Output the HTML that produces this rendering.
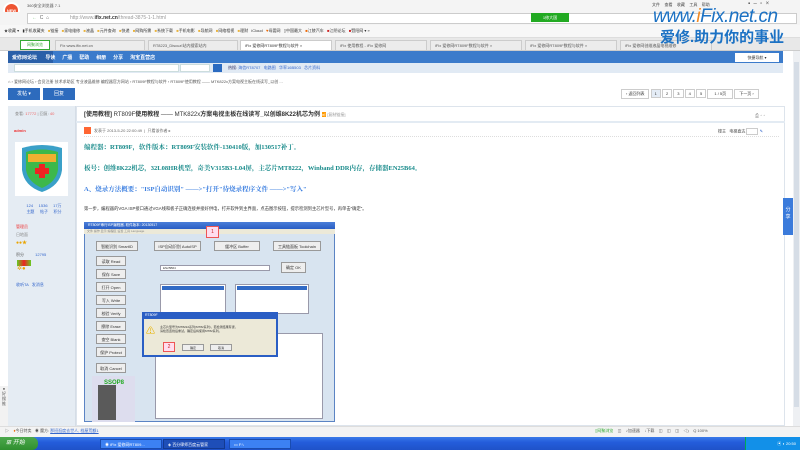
<!DOCTYPE html>
<html><head><meta charset="utf-8"><style>
*{margin:0;padding:0;box-sizing:border-box}
body{width:800px;height:450px;overflow:hidden;position:relative;background:#fff;font-family:"Liberation Sans","Noto Sans CJK SC",sans-serif;font-size:5px;color:#333}
.a{position:absolute;white-space:nowrap}
.btn{position:absolute;background:#eee;border:1px solid #999;font-size:4px;text-align:center;line-height:10px}
</style></head><body>
<!-- title bar -->
<div class="a" style="left:0;top:0;width:800px;height:13px;background:#f4f4f4"></div>
<div class="a" style="left:3px;top:2px;width:17px;height:17px;border-radius:50%;background:#e53;border:2px solid #fff;color:#fff;font-size:4px;line-height:13px;text-align:center;font-weight:bold">NEW</div>
<div class="a" style="left:27px;top:3px;font-size:4px;color:#555">360安全浏览器 7.1</div>
<div class="a" style="left:652px;top:2px;font-size:4px;color:#444">文件 &nbsp;&nbsp; 查看 &nbsp;&nbsp; 收藏 &nbsp;&nbsp; 工具 &nbsp;&nbsp; 帮助</div>
<div class="a" style="left:748px;top:1px;width:50px;height:10px;font-size:6px;color:#555">▪ &nbsp;– &nbsp;▫ &nbsp;×</div>
<!-- address -->
<div class="a" style="left:0;top:12px;width:800px;height:13px;background:#f4f4f4"></div>
<div class="a" style="left:27px;top:13px;width:770px;height:11px;background:#fff;border:1px solid #ccc"></div>
<div class="a" style="left:32px;top:15px;font-size:5px;color:#8c8">← &nbsp;<span style="color:#666">C &nbsp;⌂</span></div>
<div class="a" style="left:70px;top:15px;font-size:5px;color:#999">http://www.<b style="color:#333">ifix.net.cn</b>/thread-3875-1-1.html</div>
<div class="a" style="left:531px;top:13px;width:38px;height:9px;background:#2a2;color:#fff;font-size:4px;line-height:9px;text-align:center">1修大国</div>
<!-- bookmarks -->
<div class="a" style="left:0;top:25px;width:800px;height:13px;background:#f7f7f7;border-bottom:1px solid #ddd"></div>
<div class="a" style="left:4px;top:28px;font-size:4px;color:#333">★收藏 ▾ &nbsp; ▮手机收藏夹 &nbsp; <span style="color:#e9b23a">■</span>链接 &nbsp; <span style="color:#e9b23a">■</span>家电维修 &nbsp; <span style="color:#e9b23a">■</span>液晶 &nbsp; <span style="color:#e9b23a">■</span>元件查询 &nbsp; <span style="color:#e9b23a">■</span>快递 &nbsp; <span style="color:#e9b23a">■</span>网购所需 &nbsp; <span style="color:#e9b23a">■</span>系统下载 &nbsp; <span style="color:#e9b23a">■</span>手机电影 &nbsp; <span style="color:#e9b23a">■</span>导航网 &nbsp; <span style="color:#e9b23a">■</span>网络相视 &nbsp; <span style="color:#e9b23a">■</span>理财 &nbsp; iCloud &nbsp; <span style="color:#e60">♥</span>母婴网 &nbsp; ▯中国最大 &nbsp; <span style="color:#e60">■</span>江陵汽车 &nbsp; <span style="color:#c22">■</span>江阴论坛 &nbsp; <span style="color:#c22">■</span>暨阳网 ▾ »</div>
<!-- tabs -->
<div class="a" style="left:0;top:38px;width:800px;height:13px;background:#e8e8e8;border-bottom:1px solid #ccc"></div>
<div class="a" style="left:20px;top:40px;width:30px;height:10px;border:1px solid #3a3;color:#3a3;font-size:4px;line-height:8px;text-align:center;background:#fff">网聚浏览</div>
<div class="a" style="left:55px;top:40px;width:90px;height:11px;background:#ececec;border:1px solid #ccc;font-size:4px;line-height:9px;padding-left:4px;color:#555">Fix www.ifix.net.cn</div>
<div class="a" style="left:148px;top:40px;width:90px;height:11px;background:#ececec;border:1px solid #ccc;font-size:4px;line-height:9px;padding-left:4px;color:#555">RT8223_Discuz!站内搜索站内</div>
<div class="a" style="left:240px;top:40px;width:92px;height:11px;background:#fff;border:1px solid #ccc;font-size:4px;line-height:9px;padding-left:4px;color:#333">iFix 爱修网RT809F数程与软件 ×</div>
<div class="a" style="left:335px;top:40px;width:92px;height:11px;background:#ececec;border:1px solid #ccc;font-size:4px;line-height:9px;padding-left:4px;color:#555">iFix 使用教程 - iFix 爱修网</div>
<div class="a" style="left:430px;top:40px;width:92px;height:11px;background:#ececec;border:1px solid #ccc;font-size:4px;line-height:9px;padding-left:4px;color:#555">iFix 爱修网RT809F数程与软件 ×</div>
<div class="a" style="left:525px;top:40px;width:92px;height:11px;background:#ececec;border:1px solid #ccc;font-size:4px;line-height:9px;padding-left:4px;color:#555">iFix 爱修网RT809F数程与软件 ×</div>
<div class="a" style="left:620px;top:40px;width:92px;height:11px;background:#ececec;border:1px solid #ccc;font-size:4px;line-height:9px;padding-left:4px;color:#555">iFix 爱修网创维液晶电视维修</div>
<!-- watermark -->
<div class="a" style="left:653px;top:6px;font-size:19px;font-style:italic;color:#1c72c4;font-family:'Liberation Sans',sans-serif;letter-spacing:-0.5px">www.<span style="color:#f08a24">i</span>Fix.net.cn</div>
<div class="a" style="left:660px;top:26px;font-size:15px;font-weight:bold;color:#1c72c4">爱修.助力你的事业</div>
<!-- page -->
<div class="a" style="left:0;top:51px;width:793px;height:375px;background:#fff"></div>
<div class="a" style="left:793px;top:51px;width:7px;height:375px;background:#eef0f3"></div>
<div class="a" style="left:794px;top:62px;width:5px;height:345px;background:#d6dde6"></div>
<div class="a" style="left:8px;top:51px;width:775px;height:12px;background:#3b7bcb"></div>
<div class="a" style="left:8px;top:51px;width:45px;height:12px;background:#2a5fa8"></div>
<div class="a" style="left:12px;top:54px;font-size:5px;color:#fff;font-weight:bold">爱修网论坛 &nbsp;&nbsp;&nbsp;&nbsp; 导读 &nbsp;&nbsp;&nbsp; 广播 &nbsp;&nbsp;&nbsp; 帮助 &nbsp;&nbsp;&nbsp; 相册 &nbsp;&nbsp;&nbsp; 分享 &nbsp;&nbsp;&nbsp; 淘宝直营店</div>
<div class="a" style="left:735px;top:53px;width:44px;height:9px;background:#fff;font-size:4px;line-height:9px;text-align:center;color:#333">快捷导航 ▾</div>
<div class="a" style="left:8px;top:63px;width:775px;height:10px;background:#e1eaf4"></div>
<div class="a" style="left:14px;top:64px;width:165px;height:8px;background:#fff;border:1px solid #cdd"></div>
<div class="a" style="left:180px;top:64px;width:30px;height:8px;background:#fff;border:1px solid #cdd"></div>
<div class="a" style="left:213px;top:64px;width:9px;height:8px;background:#2a6ac0"></div>
<div class="a" style="left:228px;top:65px;font-size:4px;color:#336">热搜: <span style="color:#36c">海信RT8707 &nbsp; 电路图 &nbsp; 华率16B503 &nbsp; 芯片资料</span></div>
<div class="a" style="left:8px;top:79px;font-size:4px;color:#555">⌂ › 爱修网论坛 › 会员注册 技术求助区 专业液晶维修 编程器官方网站 › RT809F教程与软件 › RT809F使用教程 —— MTK822x方案电视主板在线读写_以创 ...</div>
<div class="a" style="left:8px;top:88px;width:32px;height:12px;background:#2d6bbd;color:#fff;font-size:5px;line-height:12px;text-align:center">发帖 ▾</div>
<div class="a" style="left:43px;top:88px;width:32px;height:12px;background:#2d6bbd;color:#fff;font-size:5px;line-height:12px;text-align:center">回复</div>
<div class="a" style="left:621px;top:89px;font-size:4px;color:#333;word-spacing:0">
<span style="display:inline-block;border:1px solid #ccc;padding:1px 4px">‹ 返回列表</span> <span style="display:inline-block;border:1px solid #ccc;padding:1px 3px;background:#e4ecf6">1</span> <span style="display:inline-block;border:1px solid #ccc;padding:1px 3px">2</span> <span style="display:inline-block;border:1px solid #ccc;padding:1px 3px">3</span> <span style="display:inline-block;border:1px solid #ccc;padding:1px 3px">4</span> <span style="display:inline-block;border:1px solid #ccc;padding:1px 3px">5</span> <span style="display:inline-block;border:1px solid #ccc;padding:1px 6px">1 / 5页</span> <span style="display:inline-block;border:1px solid #ccc;padding:1px 4px">下一页 ›</span></div>
<!-- sidebar -->
<div class="a" style="left:8px;top:106px;width:68px;height:320px;background:#e5ecf3;border-right:1px solid #d5dde6"></div>
<div class="a" style="left:15px;top:111px;font-size:4px;color:#888">查看: <span style="color:#e66">17772</span> | 回复: <span style="color:#e66">40</span></div>
<div class="a" style="left:14px;top:128px;font-size:4px;color:#e33;font-weight:bold">admin</div>
<div class="a" style="left:15px;top:142px;width:53px;height:54px;background:#fff"></div>
<svg class="a" style="left:18px;top:144px" width="48" height="50" viewBox="0 0 48 50"><path d="M4 4 Q24 -2 44 4 L44 26 Q42 42 24 48 Q6 42 4 26Z" fill="#3aa0c8"/><path d="M8 8 Q24 3 40 8 L40 26 Q38 38 24 44 Q10 38 8 26Z" fill="#3db84a"/><rect x="10" y="10" width="28" height="8" fill="#f0b030"/><rect x="21" y="20" width="6" height="14" fill="#e22"/><rect x="17" y="24" width="14" height="6" fill="#e22"/></svg>
<div class="a" style="left:14px;top:203px;font-size:4px;color:#36c;line-height:6px;text-align:center;width:60px">124 &nbsp;&nbsp;&nbsp; 1536 &nbsp;&nbsp;&nbsp; 17万<br>主题 &nbsp;&nbsp;&nbsp; 帖子 &nbsp;&nbsp;&nbsp; 积分</div>
<div class="a" style="left:16px;top:224px;font-size:4px;color:#e33">管理员</div>
<div class="a" style="left:16px;top:232px;font-size:4px;color:#888">日地面</div>
<div class="a" style="left:16px;top:239px;font-size:5px;color:#e9a400">●●★</div>
<div class="a" style="left:16px;top:252px;font-size:4px;color:#555">积分 &nbsp;&nbsp;&nbsp;&nbsp;&nbsp;&nbsp;&nbsp;&nbsp; <span style="color:#36c">12795</span></div>
<div class="a" style="left:17px;top:260px;width:14px;height:6px;background:linear-gradient(90deg,#6c2,#e22,#6c2)"></div>
<div class="a" style="left:17px;top:265px;font-size:6px;color:#e9a400">✲●</div>
<div class="a" style="left:16px;top:282px;font-size:4px;color:#36c">收听TA &nbsp; 发消息</div>
<!-- post -->
<div class="a" style="left:76px;top:106px;width:709px;height:320px;border:1px solid #dde4ec"></div>
<div class="a" style="left:76px;top:106px;width:709px;height:17px;border-bottom:2px solid #e3ebf3"></div>
<div class="a" style="left:84px;top:109px;font-size:6px;color:#333"><b>[使用教程]</b> RT809F<b>使用教程</b> —— MTK822x<b>方案电视主板在线读写_以创维8K22机芯为例</b> <span style="background:#f90;color:#fff;font-size:4px">🗐</span> <span style="font-size:4px;color:#999">[复制链接]</span></div>
<div class="a" style="left:755px;top:113px;font-size:5px;color:#888">⎙ ◦ ◦</div>
<div class="a" style="left:84px;top:127px;width:7px;height:7px;background:#f63"></div>
<div class="a" style="left:94px;top:128px;font-size:4px;color:#666">发表于 2013-5-20 22:00:49 &nbsp;|&nbsp; 只看该作者 ▸</div>
<div class="a" style="left:718px;top:128px;font-size:4px;color:#444">楼主 &nbsp; 电梯直达 <span style="display:inline-block;width:12px;height:7px;border:1px solid #ccc;vertical-align:middle"></span> <span style="color:#36c">✎</span></div>
<div class="a" style="left:84px;top:136px;width:695px;border-top:1px dotted #ddd"></div>
<div class="a" style="left:84px;top:142px;font-size:6.5px;color:#178a8a;font-weight:bold;font-family:'Liberation Serif','Noto Serif CJK SC',serif">编程器：RT809F，软件版本：RT809F安装软件-130410版，加130517补丁。</div>
<div class="a" style="left:84px;top:163px;font-size:6.5px;color:#178a8a;font-weight:bold;font-family:'Liberation Serif','Noto Serif CJK SC',serif">板号：创维8K22机芯，32L08HR机型，奇美V315B3-L04屏，主芯片MT8222，Winband DDR内存，存储器EN25B64。</div>
<div class="a" style="left:84px;top:184px;font-size:6.5px;color:#3a7ee0;font-weight:bold;font-family:'Liberation Serif','Noto Serif CJK SC',serif">A、烧录方法概要："ISP自动识别" ——&gt;"打开"待烧录程序文件 ——&gt;"写入"</div>
<div class="a" style="left:84px;top:206px;font-size:4.3px;color:#333">第一步，编程器的VGA ISP接口通过VGA线和板子正确连接并接好供电，打开软件到主界面，点击图示按钮，提示检测到主芯片型号，再单击"确定"。</div>
<!-- screenshot -->
<div class="a" style="left:84px;top:222px;width:251px;height:200px;background:#d8e4f0;border:1px solid #5b84c4"></div>
<div class="a" style="left:84px;top:222px;width:251px;height:7px;background:linear-gradient(#4b7fd8,#2a5ec4);color:#fff;font-size:3.5px;line-height:7px;padding-left:4px">RT809F串行ISP编程器, 软件版本: 20130517</div>
<div class="a" style="left:84px;top:229px;width:251px;height:5px;background:#ece9d8;font-size:3px;color:#888;padding-left:3px">文件 操作 显示 编程区 设置 工具 Language</div>
<div class="btn" style="left:96px;top:241px;width:42px;height:10px">智能识别 SmartID</div>
<div class="btn" style="left:154px;top:241px;width:47px;height:10px">ISP自动识别 AutoISP</div>
<div class="btn" style="left:214px;top:241px;width:46px;height:10px">缓冲区 Buffer</div>
<div class="btn" style="left:273px;top:241px;width:48px;height:10px">工具链面板 Toolchain</div>
<div class="a" style="left:206px;top:226px;width:13px;height:12px;background:#fde;border:1px solid #e55;color:#c22;font-size:5px;text-align:center;line-height:10px">1</div>
<div class="a" style="left:95px;top:255px;width:30px;height:120px;font-size:0"></div>
<div class="btn" style="left:96px;top:256px;width:30px;height:10px">读取 Read</div>
<div class="btn" style="left:96px;top:269px;width:30px;height:10px">保存 Save</div>
<div class="btn" style="left:96px;top:282px;width:30px;height:10px">打开 Open</div>
<div class="btn" style="left:96px;top:295px;width:30px;height:10px">写入 Write</div>
<div class="btn" style="left:96px;top:308px;width:30px;height:10px">校验 Verify</div>
<div class="btn" style="left:96px;top:321px;width:30px;height:10px">擦除 Erase</div>
<div class="btn" style="left:96px;top:334px;width:30px;height:10px">查空 Blank</div>
<div class="btn" style="left:96px;top:347px;width:30px;height:10px">保护 Protect</div>
<div class="btn" style="left:96px;top:363px;width:30px;height:10px">取消 Cancel</div>
<div class="a" style="left:160px;top:265px;width:110px;height:6px;background:#fff;border:1px solid #99a;font-size:3px;padding-left:2px">EN25B64</div>
<div class="btn" style="left:281px;top:262px;width:25px;height:11px">确定 OK</div>
<div class="a" style="left:160px;top:284px;width:66px;height:30px;background:#fff;border:1px solid #99a"><div style="background:#316ac5;height:4px;margin:1px"></div></div>
<div class="a" style="left:235px;top:284px;width:74px;height:30px;background:#fff;border:1px solid #99a"><div style="background:#316ac5;height:4px;margin:1px"></div></div>
<div class="a" style="left:155px;top:333px;width:168px;height:86px;background:#fff;border:1px solid #99a"></div>
<div class="a" style="left:142px;top:312px;width:136px;height:45px;background:#ece9d8;border:2px solid #2a5ec4"></div>
<div class="a" style="left:142px;top:312px;width:136px;height:7px;background:#2a5ec4;color:#fff;font-size:3.5px;line-height:7px;padding-left:3px">RT809F</div>
<div class="a" style="left:146px;top:324px;font-size:9px;color:#e9b400">⚠</div>
<div class="a" style="left:160px;top:325px;font-size:3px;color:#333;line-height:4px">主芯片型号为MT8222系列(MT82系列)，若检测结果有误，<br>请检查连线后重试。确定后将使用MT82系列。</div>
<div class="btn" style="left:182px;top:344px;width:22px;height:7px;line-height:6px;font-size:3px">确定</div>
<div class="btn" style="left:210px;top:344px;width:22px;height:7px;line-height:6px;font-size:3px">取消</div>
<div class="a" style="left:163px;top:342px;width:12px;height:10px;background:#fde;border:1px solid #e55;color:#c22;font-size:5px;text-align:center;line-height:8px">2</div>
<div class="a" style="left:92px;top:376px;width:43px;height:46px;background:#dde"></div>
<div class="a" style="left:98px;top:385px;width:18px;height:35px;background:#5a5a5a"></div>
<div class="a" style="left:104px;top:380px;font-size:6px;color:#2a2;font-weight:bold">SSOP8</div>
<!-- share -->
<div class="a" style="left:783px;top:198px;width:10px;height:37px;background:#3b7bdb;color:#fff;font-size:5px;line-height:7px;text-align:center;padding-top:9px">分<br>享</div>
<div class="a" style="left:0;top:386px;width:8px;height:40px;background:#f2f2f2;font-size:4px;color:#555;line-height:5px;text-align:center">●<br>好<br>搜<br>推</div>
<!-- statusbar -->
<div class="a" style="left:0;top:426px;width:800px;height:11px;background:#f3f3f3;border-top:1px solid #ddd"></div>
<div class="a" style="left:5px;top:428px;font-size:4px;color:#555">▷ &nbsp;&nbsp; <span style="color:#e60">♦</span>今日特卖 &nbsp; ◉ 魔方: <span style="color:#36c;text-decoration:underline">那班逛度去世人, 档屋荒额1</span></div>
<div class="a" style="left:595px;top:428px;font-size:4px;color:#555"><span style="color:#3a3">▯网聚浏览</span> &nbsp;&nbsp; ◫ &nbsp;&nbsp; ♪加速器 &nbsp;&nbsp; ↓下载 &nbsp;&nbsp; ◫ &nbsp;&nbsp; ◫ &nbsp;&nbsp; ◫ &nbsp;&nbsp; ◁) &nbsp;&nbsp; Q 100%</div>
<!-- taskbar -->
<div class="a" style="left:0;top:437px;width:800px;height:13px;background:linear-gradient(#3a7ae8,#245ddb 40%,#1f52c8)"></div>
<div class="a" style="left:0;top:437px;width:38px;height:13px;background:linear-gradient(#4ca84c,#2f8f2f);border-radius:0 6px 6px 0;color:#fff;font-size:6px;font-style:italic;line-height:13px;padding-left:6px">⊞ 开始</div>
<div class="a" style="left:100px;top:439px;width:62px;height:10px;background:#3c81f3;border:1px solid #1a4cb0;color:#fff;font-size:4px;line-height:9px;padding-left:4px">◉ iFix 爱修网RT809...</div>
<div class="a" style="left:163px;top:439px;width:62px;height:10px;background:#1e4eb8;border:1px solid #143a90;color:#fff;font-size:4px;line-height:9px;padding-left:4px">◈ 百分律师百度云管家</div>
<div class="a" style="left:229px;top:439px;width:62px;height:10px;background:#3c81f3;border:1px solid #1a4cb0;color:#fff;font-size:4px;line-height:9px;padding-left:4px">▭ F:\</div>
<div class="a" style="left:745px;top:437px;width:55px;height:13px;background:#1290e8;border-left:1px solid #0a5;color:#fff;font-size:4px;line-height:13px;text-align:right;padding-right:4px">▣ ◐ 20:50</div>
</body></html>
